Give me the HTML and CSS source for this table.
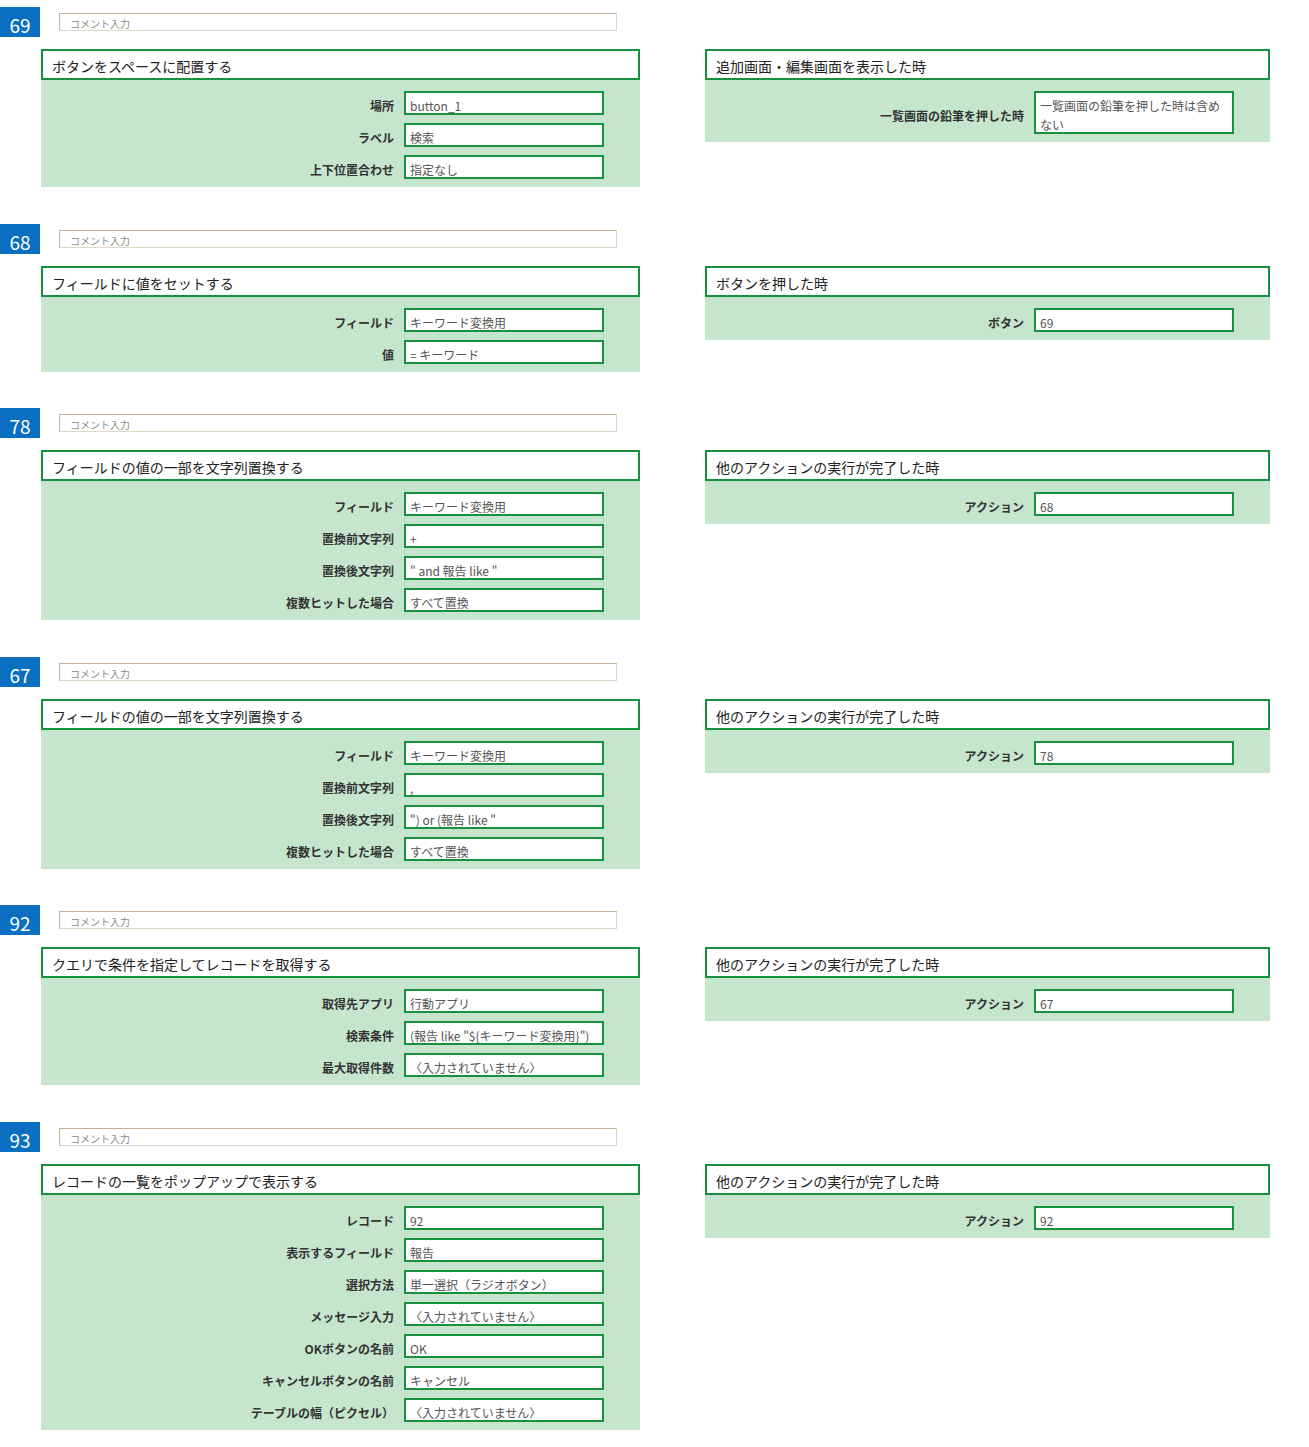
FILE: index.html
```html
<!DOCTYPE html>
<html lang="ja">
<head>
<meta charset="utf-8">
<title>アクション一覧</title>
<link rel="stylesheet" href="styles.css">
</head>
<body>
<div class="page">

  <section class="sec">
    <div class="sec-top"><div class="num">69</div><div class="comment">コメント入力</div></div>
    <div class="cards">
      <div class="card main">
        <div class="card-title">ボタンをスペースに配置する</div>
        <div class="card-body">
          <div class="row"><div class="lbl">場所</div><div class="val">button_1</div></div>
          <div class="row"><div class="lbl">ラベル</div><div class="val">検索</div></div>
          <div class="row"><div class="lbl">上下位置合わせ</div><div class="val">指定なし</div></div>
        </div>
      </div>
      <div class="card trig">
        <div class="card-title">追加画面・編集画面を表示した時</div>
        <div class="card-body">
          <div class="row"><div class="lbl">一覧画面の鉛筆を押した時</div><div class="val multi">一覧画面の鉛筆を押した時は含めない</div></div>
        </div>
      </div>
    </div>
  </section>

  <section class="sec">
    <div class="sec-top"><div class="num">68</div><div class="comment">コメント入力</div></div>
    <div class="cards">
      <div class="card main">
        <div class="card-title">フィールドに値をセットする</div>
        <div class="card-body">
          <div class="row"><div class="lbl">フィールド</div><div class="val">キーワード変換用</div></div>
          <div class="row"><div class="lbl">値</div><div class="val">= キーワード</div></div>
        </div>
      </div>
      <div class="card trig">
        <div class="card-title">ボタンを押した時</div>
        <div class="card-body">
          <div class="row"><div class="lbl">ボタン</div><div class="val">69</div></div>
        </div>
      </div>
    </div>
  </section>

  <section class="sec">
    <div class="sec-top"><div class="num">78</div><div class="comment">コメント入力</div></div>
    <div class="cards">
      <div class="card main">
        <div class="card-title">フィールドの値の一部を文字列置換する</div>
        <div class="card-body">
          <div class="row"><div class="lbl">フィールド</div><div class="val">キーワード変換用</div></div>
          <div class="row"><div class="lbl">置換前文字列</div><div class="val">+</div></div>
          <div class="row"><div class="lbl">置換後文字列</div><div class="val">" and 報告 like "</div></div>
          <div class="row"><div class="lbl">複数ヒットした場合</div><div class="val">すべて置換</div></div>
        </div>
      </div>
      <div class="card trig">
        <div class="card-title">他のアクションの実行が完了した時</div>
        <div class="card-body">
          <div class="row"><div class="lbl">アクション</div><div class="val">68</div></div>
        </div>
      </div>
    </div>
  </section>

  <section class="sec">
    <div class="sec-top"><div class="num">67</div><div class="comment">コメント入力</div></div>
    <div class="cards">
      <div class="card main">
        <div class="card-title">フィールドの値の一部を文字列置換する</div>
        <div class="card-body">
          <div class="row"><div class="lbl">フィールド</div><div class="val">キーワード変換用</div></div>
          <div class="row"><div class="lbl">置換前文字列</div><div class="val">,</div></div>
          <div class="row"><div class="lbl">置換後文字列</div><div class="val">") or (報告 like "</div></div>
          <div class="row"><div class="lbl">複数ヒットした場合</div><div class="val">すべて置換</div></div>
        </div>
      </div>
      <div class="card trig">
        <div class="card-title">他のアクションの実行が完了した時</div>
        <div class="card-body">
          <div class="row"><div class="lbl">アクション</div><div class="val">78</div></div>
        </div>
      </div>
    </div>
  </section>

  <section class="sec">
    <div class="sec-top"><div class="num">92</div><div class="comment">コメント入力</div></div>
    <div class="cards">
      <div class="card main">
        <div class="card-title">クエリで条件を指定してレコードを取得する</div>
        <div class="card-body">
          <div class="row"><div class="lbl">取得先アプリ</div><div class="val">行動アプリ</div></div>
          <div class="row"><div class="lbl">検索条件</div><div class="val">(報告 like "${キーワード変換用}")</div></div>
          <div class="row"><div class="lbl">最大取得件数</div><div class="val">〈入力されていません〉</div></div>
        </div>
      </div>
      <div class="card trig">
        <div class="card-title">他のアクションの実行が完了した時</div>
        <div class="card-body">
          <div class="row"><div class="lbl">アクション</div><div class="val">67</div></div>
        </div>
      </div>
    </div>
  </section>

  <section class="sec">
    <div class="sec-top"><div class="num">93</div><div class="comment">コメント入力</div></div>
    <div class="cards">
      <div class="card main">
        <div class="card-title">レコードの一覧をポップアップで表示する</div>
        <div class="card-body">
          <div class="row"><div class="lbl">レコード</div><div class="val">92</div></div>
          <div class="row"><div class="lbl">表示するフィールド</div><div class="val">報告</div></div>
          <div class="row"><div class="lbl">選択方法</div><div class="val">単一選択（ラジオボタン）</div></div>
          <div class="row"><div class="lbl">メッセージ入力</div><div class="val">〈入力されていません〉</div></div>
          <div class="row"><div class="lbl">OKボタンの名前</div><div class="val">OK</div></div>
          <div class="row"><div class="lbl">キャンセルボタンの名前</div><div class="val">キャンセル</div></div>
          <div class="row"><div class="lbl">テーブルの幅（ピクセル）</div><div class="val">〈入力されていません〉</div></div>
        </div>
      </div>
      <div class="card trig">
        <div class="card-title">他のアクションの実行が完了した時</div>
        <div class="card-body">
          <div class="row"><div class="lbl">アクション</div><div class="val">92</div></div>
        </div>
      </div>
    </div>
  </section>

</div>
</body>
</html>
```

FILE: styles.css
```css
body {
  margin: 0;
  background: #ffffff;
  font-family: "Noto Sans CJK JP", "Noto Sans", sans-serif;
  color: #222222;
}

.page {
  padding-top: 7px;
}

.sec {
  margin-bottom: 36.6px;
}

.sec-top {
  display: flex;
  align-items: flex-start;
  height: 30px;
  margin-bottom: 12px;
}

.num {
  width: 40px;
  height: 30px;
  box-sizing: border-box;
  background: #0a6fc0;
  color: #ffffff;
  font-size: 19px;
  line-height: 25px;
  padding-top: 5px;
  text-align: center;
  overflow: hidden;
}

.comment {
  margin-left: 19px;
  margin-top: 6px;
  width: 558px;
  height: 18px;
  box-sizing: border-box;
  border: 1px solid #e0d5c6;
  border-top-color: #c4b096;
  border-left-color: #c4b096;
  font-size: 10px;
  line-height: 16px;
  padding: 2px 0 0 10px;
  color: #8a8a8a;
  overflow: hidden;
}

.cards {
  display: flex;
  align-items: flex-start;
  margin-left: 41px;
  gap: 65px;
}

.card.main {
  width: 599px;
}

.card.trig {
  width: 565px;
}

.card-title {
  height: 31px;
  box-sizing: border-box;
  border: 2px solid #17913f;
  background: #ffffff;
  font-size: 14px;
  line-height: 20px;
  padding: 5px 0 0 9px;
  color: #222222;
  white-space: nowrap;
  overflow: hidden;
}

.card-body {
  background: #c5e5cd;
  padding: 11px 36px 8px 0;
  display: flex;
  flex-direction: column;
  gap: 8px;
}

.row {
  display: flex;
  justify-content: flex-end;
  align-items: center;
}

.lbl {
  font-size: 12px;
  font-weight: bold;
  color: #333333;
  line-height: 18px;
  padding-top: 6px;
  margin-right: 10px;
  white-space: nowrap;
}

.val {
  width: 200px;
  height: 24px;
  box-sizing: border-box;
  border: 2px solid #17913f;
  background: #ffffff;
  font-size: 12px;
  line-height: 18px;
  padding: 4px 6px 0 4px;
  color: #555555;
  white-space: nowrap;
  overflow: hidden;
}

.val.multi {
  height: 43px;
  white-space: normal;
  padding-top: 3px;
  line-height: 19px;
}
```
